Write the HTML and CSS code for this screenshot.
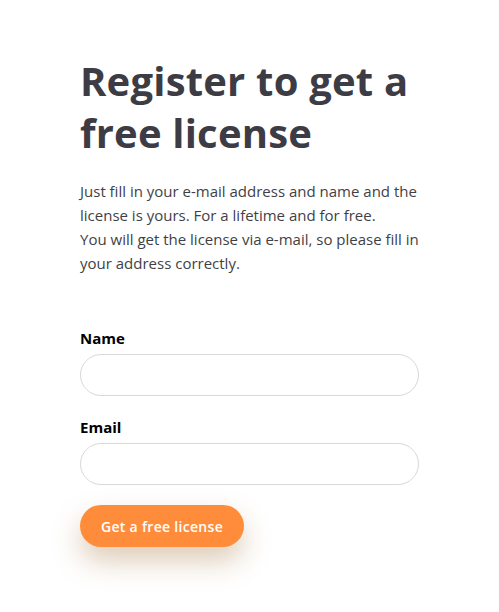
FILE: index.html
```html
<!DOCTYPE html>
<html lang="en">
<head>
<meta charset="utf-8">
<title>Register</title>
<link rel="stylesheet" href="styles.css">
</head>
<body>
<main class="page">
  <h1 class="title">Register to get a free license</h1>
  <p class="intro">Just fill in your e-mail address and name and the license is yours. For a lifetime and for free.<br>You will get the license via e-mail, so please fill in your address correctly.</p>
  <form class="form">
    <label class="field">
      <span class="label">Name</span>
      <input class="input" type="text">
    </label>
    <label class="field">
      <span class="label">Email</span>
      <input class="input" type="email">
    </label>
    <button class="btn" type="button">Get a free license</button>
  </form>
</main>
</body>
</html>
```
FILE: styles.css
```css
* { box-sizing: border-box; }
html, body { margin: 0; padding: 0; background: #fff; }
body { font-family: "Open Sans", sans-serif; }
.page {
  width: 339px;
  margin-left: 80px;
  padding-top: 55px;
  padding-bottom: 60px;
}
.title {
  margin: 0;
  font-family: "Open Sans", sans-serif;
  font-weight: 700;
  font-size: 40px;
  line-height: 52px;
  color: #3d3c44;
  letter-spacing: 0.2px;
}
.intro {
  margin: 20px 0 0;
  font-size: 15px;
  line-height: 24px;
  color: #3f3f46;
}
.form {
  margin-top: 52px;
  display: flex;
  flex-direction: column;
  gap: 20px;
  align-items: flex-start;
}
.field {
  display: flex;
  flex-direction: column;
  gap: 5px;
  width: 100%;
}
.label {
  font-weight: 700;
  font-size: 15px;
  line-height: 22px;
  color: #000;
}
.input {
  width: 100%;
  height: 42px;
  border: 1px solid #d9d9d9;
  border-radius: 21px;
  background: #fff;
  outline: none;
  padding: 0 20px;
}
.btn {
  height: 42px;
  padding: 0 21px;
  border: none;
  border-radius: 21px;
  background: #ff8c3b;
  color: #fff;
  font-family: "Open Sans", sans-serif;
  font-weight: 600;
  font-size: 14px;
  letter-spacing: 0.3px;
  box-shadow: 0 14px 28px rgba(160, 110, 50, 0.35);
}
```
